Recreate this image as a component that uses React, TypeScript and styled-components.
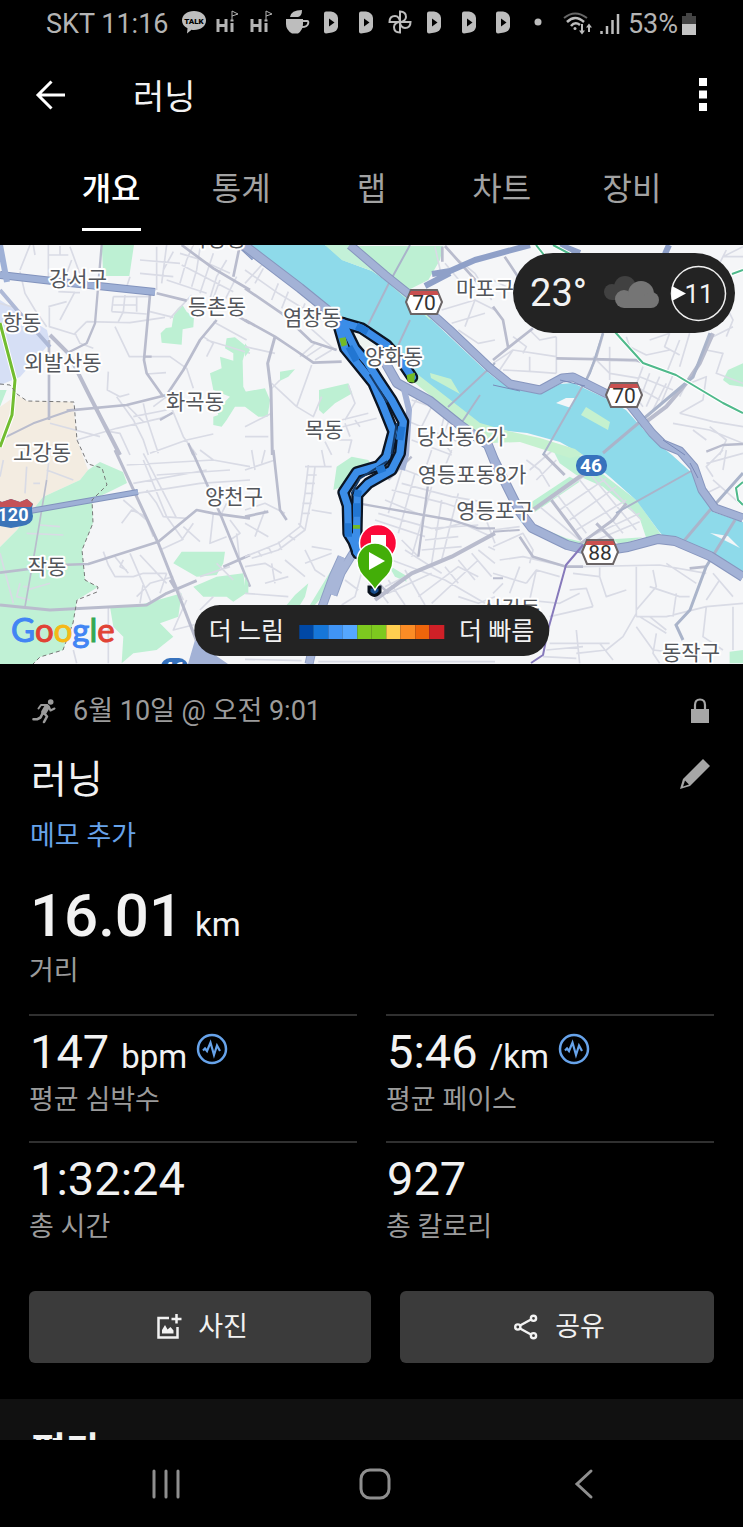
import React from "react";
import styled, { createGlobalStyle } from "styled-components";

const GlobalStyle = createGlobalStyle`
  * { box-sizing: border-box; }
  html, body { margin: 0; padding: 0; background: #000; }
  body { font-family: Roboto, "Noto Sans CJK KR", sans-serif; color: #f2f2f2; }
  button { font: inherit; color: inherit; border: 0; background: none; padding: 0; cursor: pointer; }
  svg { display: block; }
`;

const Screen = styled.div`
  display: flex;
  flex-direction: column;
  height: 100vh;
  background: #000;
`;

const StatusBar = styled.div`
  display: flex;
  align-items: center;
  flex: none;
  height: 46px;
  padding: 2px 46px 0;
  font-size: 27px;
  line-height: 32px;
  color: #b4b4b4;
`;

const StatusIcons = styled.div`
  flex: 1;
  display: grid;
  grid-template-columns: repeat(11, 1fr);
  justify-items: center;
  align-items: center;
  margin: 0 8px 4px 8px;
`;

const StatusRight = styled.div`
  display: flex;
  align-items: center;
  gap: 8px;
`;

const Battery = styled.span`
  display: flex;
  align-items: center;
  gap: 4px;
`;

const Header = styled.header`
  display: flex;
  align-items: center;
  flex: none;
  height: 97px;
  padding: 0 33px;
`;

const HeaderTitle = styled.h1`
  flex: 1;
  margin: 0 0 0 64px;
  padding-top: 4px;
  font-size: 34px;
  font-weight: 400;
  line-height: 48px;
`;

const Tabs = styled.nav`
  display: flex;
  flex: none;
  height: 102px;
  padding: 0 46px;
`;

const TabItem = styled.div`
  flex: 1;
  display: flex;
  justify-content: center;
  align-items: flex-start;
`;

const Tab = styled.button<{ $active?: boolean }>`
  height: 88px;
  font-size: 32px;
  line-height: 46px;
  padding-top: 6px;
  font-weight: ${(p) => (p.$active ? 500 : 400)};
  color: ${(p) => (p.$active ? "#fff" : "#a2a2a2")};
  border-bottom: 3px solid ${(p) => (p.$active ? "#fff" : "transparent")};
`;

const Scroller = styled.main`
  flex: 1;
  min-height: 0;
  overflow-y: auto;
  scrollbar-width: none;
`;

const MapPanel = styled.section`
  position: relative;
  height: 419px;
  overflow: hidden;
  background: #f5f6f8;

  > svg { width: 100%; height: 100%; }
`;

const Weather = styled.div`
  position: absolute;
  top: 8px;
  right: 8px;
  display: flex;
  align-items: center;
  height: 80px;
  padding: 0 8px 0 17px;
  border-radius: 40px;
  background: #232323;
  font-size: 38px;
  line-height: 48px;

  > svg:first-of-type { margin: 0 9px 0 17px; }
`;

const Legend = styled.div`
  position: absolute;
  bottom: 8px;
  left: 50%;
  transform: translateX(-50%);
  display: flex;
  align-items: center;
  gap: 15px;
  height: 51px;
  padding: 2px 15px 0;
  border-radius: 26px;
  background: #232323;
  font-size: 25px;
  line-height: 36px;
  white-space: nowrap;
`;

const Scale = styled.div`
  display: flex;
  width: 145px;
  height: 14px;
`;

const Swatch = styled.span<{ $color: string }>`
  flex: 1;
  background: ${(p) => p.$color};
`;

const Summary = styled.section`
  padding: 27px 29px 36px;
`;

const MetaRow = styled.div`
  display: flex;
  align-items: center;
  height: 40px;
  padding: 0 4px 0 3px;
  font-size: 27px;
  line-height: 40px;
  color: #9b9b9b;
`;

const DateText = styled.span`
  flex: 1;
  margin-left: 16px;
`;

const TitleRow = styled.div`
  display: flex;
  align-items: center;
  justify-content: space-between;
  height: 60px;
  margin-top: 19px;
  padding: 0 3px 0 2px;
`;

const ActivityTitle = styled.h2`
  margin: 0;
  font-size: 39px;
  font-weight: 400;
  line-height: 60px;
`;

const EditButton = styled.button`
  padding-bottom: 12px;
`;

const NoteButton = styled.button`
  display: block;
  font-size: 27px;
  line-height: 40px;
  margin: 6px 0 0 1px;
  color: #67a3ea;
`;

const Metric = styled.div`
  display: flex;
  flex-direction: column;
`;

const Value = styled.div<{ $large?: boolean }>`
  display: flex;
  align-items: baseline;
  gap: 12px;
  padding-left: 1px;
  font-size: ${(p) => (p.$large ? 60 : 47)}px;
  font-weight: ${(p) => (p.$large ? 500 : 400)};
  line-height: ${(p) => (p.$large ? 74 : 60)}px;
`;

const Unit = styled.span`
  font-size: 33px;
  font-weight: 400;
  line-height: 36px;
  margin-right: -3px;
`;

const PulseButton = styled.button`
  align-self: flex-start;
  margin-top: 11px;
  line-height: 32px;
`;

const Label = styled.div`
  font-size: 27px;
  line-height: 36px;
  color: #9b9b9b;
`;

const DistanceBlock = styled.div`
  margin: 23px 0 25px;
`;

const MetricGrid = styled.div`
  display: grid;
  grid-template-columns: 1fr 1fr;
  column-gap: 29px;
`;

const GridCell = styled(Metric)`
  height: 127px;
  padding-top: 6px;
  border-top: 2px solid #303030;
`;

const Actions = styled.div`
  display: grid;
  grid-template-columns: 12fr 11fr;
  gap: 29px;
  margin-top: 23px;
`;

const ActionButton = styled.button`
  display: flex;
  align-items: center;
  justify-content: center;
  gap: 16px;
  height: 72px;
  padding-left: 4px;
  border-radius: 6px;
  background: #3b3b3b;
  font-size: 27px;
  line-height: 40px;
  color: #f2f2f2;
`;

const NextSection = styled.section`
  padding: 24px 31px;
  background: #111;
`;

const SectionTitle = styled.h2`
  margin: 0;
  font-size: 38px;
  font-weight: 700;
  line-height: 56px;
`;

const NavBar = styled.nav`
  display: flex;
  align-items: center;
  justify-content: space-around;
  flex: none;
  height: 87px;
  padding: 0 55px 0 61px;
  background: #000;
`;

const NavButton = styled.button`
  display: flex;
  align-items: center;
  justify-content: center;
  width: 80px;
  height: 60px;
`;

/* ---------- status icons ---------- */

const HiIcon = () => (
  <svg width="24" height="24" viewBox="0 0 24 24" fill="none" stroke="#b4b4b4">
    <path d="M2 9V22M10 9V22M2 15.500H10M16 13V22" strokeWidth="3" />
    <path d="M16 10V1L22 4 16 6" strokeWidth="1" />
    <path d="M14.500 10.500H17.500" strokeWidth="2" />
  </svg>
);

const PlayTile = () => (
  <svg width="16" height="24" viewBox="0 0 16 24">
    <path d="M3 1.500H8Q14.500 2.500 15 8V17Q14 21.500 9 22.500L3 23.500Q1 23.500 1 21.500V3.500Q1 1.500 3 1.500Z" fill="#bdbdbd" />
    <path d="M6 8.500L11.500 12.500 6 16.500Z" fill="#000" />
  </svg>
);

const TalkIcon = () => (
  <svg width="26" height="24" viewBox="0 0 26 24">
    <path d="M13 1C20 1 25 5 25 10.500S20 20 13 20Q11.500 20 10.500 19.700L6 23.500 6.500 18.300C3 16.600 1 13.800 1 10.500 1 5 6 1 13 1Z" fill="#bdbdbd" />
    <text x="13" y="13.500" textAnchor="middle" fontSize="8" fontWeight="900" fontFamily="Roboto, sans-serif" fill="#000">TALK</text>
  </svg>
);

const CupIcon = () => (
  <svg width="26" height="26" viewBox="0 0 26 26">
    <path d="M6 8Q7 1 18 1 18 7 14 8Z" fill="#bdbdbd" />
    <path d="M2 10H19V15Q19 21 14 24.500H8Q2 21 2 15Z" fill="#bdbdbd" />
    <path d="M19 12H23Q25 12 24 15 23 18 18 18" fill="none" stroke="#bdbdbd" strokeWidth="2" />
  </svg>
);

const PinwheelIcon = () => (
  <svg width="24" height="24" viewBox="0 0 24 24" fill="none" stroke="#bdbdbd" strokeWidth="2">
    {[0, 90, 180, 270].map((a) => (
      <path key={a} transform={`rotate(${a} 12 12)`} d="M12 12V1.500C16 1.500 18 4 18 7 18 10 15 12 12 12Z" />
    ))}
  </svg>
);

const WifiIcon = () => (
  <svg width="29" height="24" viewBox="0 0 29 24" fill="none" stroke="#bdbdbd">
    <path d="M1 6Q12-3 24 6" stroke="#666" strokeWidth="2" />
    <path d="M4 10Q12 2 21 10" strokeWidth="2.500" />
    <path d="M8 14Q12 9 17 13" strokeWidth="2.500" />
    <circle cx="12" cy="16.500" r="1.500" fill="#bdbdbd" stroke="none" />
    <path d="M19 12V20M26 20V13" strokeWidth="2" />
    <path d="M16 18.500H22L19 22.500ZM23 15.500H29L26 11.500Z" fill="#bdbdbd" stroke="none" />
  </svg>
);

const SignalIcon = () => (
  <svg width="20" height="22" viewBox="0 0 20 22" stroke="#bdbdbd" strokeWidth="2.500">
    <path d="M1.500 18V21M7 13V21M12.500 7V21M18 1V21" />
  </svg>
);

const BatteryIcon = () => (
  <svg width="15" height="22" viewBox="0 0 15 22">
    <path d="M4 0H10V3H14V11H0V3H4Z" fill="#444" />
    <path d="M0 11H14V22H0Z" fill="#c4c4c4" />
  </svg>
);

/* ---------- app icons ---------- */

const BackArrow = () => (
  <svg width="36" height="32" viewBox="0 0 36 32" fill="none" stroke="#fff" strokeWidth="3">
    <path d="M18.500 2.500L5 16 18.500 29.500M5 16H32" />
  </svg>
);

const MoreIcon = () => (
  <svg width="14" height="34" viewBox="0 0 14 34" fill="#fff">
    <path d="M3 0H11V8H3ZM3 12.500H11V20.500H3ZM3 25H11V33H3Z" />
  </svg>
);

const RunnerIcon = () => (
  <svg width="25" height="25" viewBox="0 0 25 25" fill="none" stroke="#9b9b9b" strokeLinecap="round" strokeLinejoin="round">
    <circle cx="18.700" cy="3" r="2.800" fill="#9b9b9b" stroke="none" />
    <path d="M15 8L12 13" strokeWidth="5.500" />
    <path d="M15 6L9 6 6.500 9.500M17 8L18.500 11.500 22.500 9.500" strokeWidth="2" />
    <path d="M12 14L15 17.500 12 23M10.500 14.500L8.500 18.500 5 20.300 1.500 20.300" strokeWidth="2.600" />
  </svg>
);

const LockIcon = () => (
  <svg width="20" height="26" viewBox="0 0 20 26">
    <path d="M5 12V7Q5 1.500 10 1.500T15 7V12" fill="none" stroke="#a6a6a6" strokeWidth="2.200" />
    <path d="M1 11H19V25H1Z" fill="#a6a6a6" />
  </svg>
);

const PencilIcon = () => (
  <svg width="32" height="32" viewBox="0 0 32 32">
    <path d="M24 1L31 8 11 28 1 31 4 21Z" fill="#a6a6a6" />
    <path d="M6 22.500L10 26.500 4 28.500Z" fill="#000" />
  </svg>
);

const PulseIcon = () => (
  <svg width="32" height="32" viewBox="0 0 32 32" fill="none" stroke="#67a3ea">
    <circle cx="16" cy="16" r="14" strokeWidth="2.500" />
    <path d="M7 17.500L9 15.500 11 18 14.500 9.500 18 22 21 12.500 24 18" strokeWidth="2.200" />
  </svg>
);

const PhotoIcon = () => (
  <svg width="26" height="26" viewBox="0 0 26 26" fill="none" stroke="#f2f2f2" strokeWidth="2.500">
    <path d="M13 4H2.500V23.500H21.500V13" />
    <path d="M20.500 0V9.500M15.500 5H25.500" />
    <path d="M6 19.500V16L9 11 11.500 15.500 14.500 13 17.500 16.500V19.500Z" fill="#f2f2f2" stroke="none" />
  </svg>
);

const ShareIcon = () => (
  <svg width="26" height="26" viewBox="0 0 26 26" fill="none" stroke="#f2f2f2" strokeWidth="2.400">
    <path d="M18 5.500L7 11.500M7 14.500L18 20.500" />
    <circle cx="4.800" cy="13" r="2.600" />
    <circle cx="20.500" cy="4.300" r="2.600" />
    <circle cx="20.500" cy="21.700" r="2.600" />
  </svg>
);

/* ---------- map ---------- */

type Road = { d: string; w: number };
type Tile = { x: number; y: number; parks: string; minor: string; mid: Road[] };

/* Street tiles, drawn at three units to the pixel. */
const TILES: Tile[] = [
  {
    x: 0,
    y: 240,
    parks:
      "M305 15H402L388 108H310ZM520 232Q530 200 548 196L560 215 582 232 580 262 548 268 545 314 485 308 482 280 498 264 515 262ZM680 295L705 292 740 320 728 362 730 440 750 480V500L705 500 680 540 665 560 640 555 640 530 655 525 650 510 690 470 640 450 630 400 665 385 660 350 700 362 700 340 675 325ZM0 450H20L0 500Z",
    minor:
      "M145 15V110M145 45H205M180 18V45M90 15L60 90M215 60L200 100M60 95L75 160 105 210 140 260M175 155L240 158M145 200L200 185M148 200V260L230 285M225 155L180 240M260 245L225 280 240 310 280 325M260 245L390 248 495 232M340 170L335 215M340 170H450M335 215L440 222M375 165L370 215 355 245M410 170V215M340 195H410M345 260L388 350 510 350 560 385 580 445M325 395L322 450 360 470 388 462M440 402L498 398M350 470L400 540 430 600 445 645M430 490L440 535 475 640M380 495L430 545M400 530L500 510M230 600L350 565 480 535 518 520M290 510L330 575 360 580 390 645M150 550L300 590M515 505L550 590 590 645M450 640L560 600 640 582M500 470L460 500M580 15L560 60 540 130M600 25L590 90 575 140M640 40L620 100 600 160M680 60L650 110 630 175M545 75L700 155M500 120L620 160M540 40L590 55 690 100M575 165L510 235M640 245L740 300M620 300L750 340M450 215L520 232M470 20V150M500 15L485 130M420 60L540 70M420 100L520 110M390 110L380 140M520 35L490 90M210 20L250 130M660 120L640 175M710 110L660 210M610 290L640 310 620 350M50 205L0 190M100 15L105 45",
    mid: [
      { d: "M305 15L285 250 260 310 200 340", w: 7 },
      { d: "M470 160L560 182M450 165L432 360 440 400 490 470", w: 8 },
      { d: "M650 240L600 300 550 390 500 465 380 495 200 512", w: 8 },
      { d: "M0 600L100 550 215 510", w: 6 },
      { d: "M147 300V540", w: 8 },
      { d: "M150 285L205 340 270 470 360 645", w: 12 },
      { d: "M545 15L640 85 750 150M720 15L700 110M690 215L750 250", w: 8 },
      { d: "M480 540L518 518M430 350H455M565 610L580 645", w: 7 },
    ],
  },
  {
    x: 245,
    y: 240,
    parks:
      "M240 18H595L585 60 550 120 490 150 420 120 380 90 290 60ZM222 450L310 430 322 460 270 490 235 522 222 510ZM0 455L60 445 75 480 68 530 40 530 0 500ZM105 395L150 388 130 410 105 422ZM0 310L15 330 0 350Z",
    minor:
      "M0 90L100 160 240 245M55 85L30 130M100 130L80 180M130 155L110 205M180 190L160 240M0 130L50 75M0 320L90 340M165 350L210 310M185 350L230 320M210 360L260 330M200 375L155 500 205 530 230 470M80 430L155 500M310 435L330 490 300 540M250 550L370 520M255 570L395 535M330 540L345 560M300 550L315 590M240 605L260 645M255 600H320L310 640M75 450L105 420M600 20L640 60 690 100 740 180M600 70L650 130M590 210L690 180 750 210M620 250L720 220M640 270L700 310 750 300M690 180L660 260M490 440L520 470 490 520M500 480L560 500 530 560M560 470L600 520 580 600M450 440L480 460M620 520L590 600 620 640M480 540L650 610M500 600L620 645M570 20L590 110M0 590H70M180 250L270 330M0 560L80 520",
    mid: [
      { d: "M0 145L110 220M0 240L90 290 150 330 205 368 290 365M110 220L200 305 275 330", w: 8 },
      { d: "M90 290L68 370 78 450 82 645", w: 9 },
      { d: "M592 20V65M600 18L700 130", w: 8 },
    ],
  },
  {
    x: 493,
    y: 240,
    parks: "M690 420L705 390 750 370V440L710 435Z",
    minor:
      "M0 120L40 140M0 370L60 330 190 350M20 390L60 330M30 390L120 395 190 400M110 350V395M190 290V400M190 290L140 300 110 270M60 290L100 320 90 340M300 350L350 400 440 415M350 320V420M310 360L450 365M400 290L410 320 460 345 530 330M470 300L530 280M530 280L515 320 560 345M560 300L520 400M590 280L560 380M450 380L420 460 450 500M470 400L440 480M500 410L460 500M520 430L480 510M430 440L500 480M440 410L540 450M540 405L500 500M580 430L560 470M590 430L640 410 630 480 560 520M640 330L690 340 670 400 750 430M700 290L720 240 700 200M660 290L720 260M650 130L690 50 750 20M560 520L660 545 750 560M650 560L700 600 680 645M600 570L640 600M540 550L650 570 750 610M700 30L690 50H750",
    mid: [
      { d: "M0 360L50 320 120 265M0 200L30 240 45 320M35 50L75 110", w: 8 },
      { d: "M190 355L430 360 530 400M330 280L310 350 280 420", w: 8 },
      { d: "M660 280L620 370 580 430 520 500 440 560", w: 12 },
      { d: "M640 635L690 615 750 612", w: 7 },
    ],
  },
  {
    x: 0,
    y: 450,
    parks:
      "M520 340L545 305 675 305 670 340 650 375 590 380ZM580 410L650 380 730 370 738 430 700 455 680 440 610 440ZM330 470L400 470 545 430 535 500 480 520 520 560 470 600 400 610 365 640 370 560 340 530Z",
    minor:
      "M80 50L75 130M10 30L0 80M140 60L220 90M150 0L140 90M100 100H120M80 250L190 255M120 225L180 230M380 45L640 30M400 100L620 60M430 30L500 200 550 270M430 10L530 205M470 75L690 60M410 130L600 100 750 90M365 220L395 180 440 200M370 150L440 210 460 260M440 120L470 160 490 200 560 205M550 230L600 275M480 300L545 270 580 220M640 190L630 280 680 260M690 210L720 250 690 270M310 305L325 345 345 380 400 380 430 370 500 370M345 320L385 370M370 330L360 350 380 360M390 310L455 460M420 315L500 400M410 440L450 400 520 380M430 400L420 460M500 370L480 430M560 450L520 540 600 520M600 380L690 350M650 340L700 390M0 310L40 460M150 400L80 420M60 400L50 440 90 450M70 410H90M325 470V640M220 600L230 640M600 0L640 30 750 50M710 250L720 340M640 440L600 480M680 160L660 200M520 390L550 450",
    mid: [
      { d: "M345 0L475 280 550 470 600 600", w: 9 },
      { d: "M0 368L180 345 265 342 475 275 590 180 640 190 750 205", w: 8 },
      { d: "M0 465L150 480 440 465 500 430 590 392", w: 9 },
      { d: "M575 0L660 190 750 410M670 350L750 315M510 390L525 415", w: 8 },
      { d: "M75 470L105 300 140 90", w: 5 },
    ],
  },
  {
    x: 245,
    y: 450,
    parks:
      "M265 350L290 320 240 430 210 465H195ZM190 400L180 440 165 465H125L150 435ZM275 50L320 20 370 30 385 55 330 70 290 110 265 120ZM430 345L480 375 485 395 450 380ZM0 380L10 400V430H0Z",
    minor:
      "M180 50H260M190 45L180 130 165 230 100 280 0 320M210 50L200 140 180 240 100 300 20 325M185 75H215M180 100H210M178 130H205M172 160H200M170 190H195M160 220L180 240M130 255L150 270M100 275L110 300M70 290L80 310M40 305L50 320M0 60L90 30M20 0L30 60M60 0L50 40M0 220L70 260M0 180L60 160 120 190M200 180L260 190M60 180L30 260M230 0L240 50M0 350L60 340 110 370M60 400L130 380M80 340L90 400M0 430L130 440M180 340L260 310M200 290L260 300M180 300L210 360 240 380M120 330L180 380M480 60L560 90M470 100L620 140M440 120L600 160M420 150L540 200M400 190L560 235 700 225M390 210L540 260M470 60L430 190M510 70L460 250M560 110L500 320M590 150L560 340M640 130L590 330M620 140L740 160M660 60L600 90M560 0L540 60M620 0L600 50M570 240L650 220 740 260M540 270L640 260M530 300L650 290M600 160L720 200 750 280M470 270L520 320M440 330L600 390 720 460M480 300L590 370M420 410L540 350M430 430L560 370M520 440L640 350 700 380M560 460L700 330M600 350L640 400M640 330L690 390M680 310L740 380M700 300L750 340M730 290L750 300M640 440L700 460 750 440M0 628L170 632M220 635H750M430 460L400 420 370 400M480 465L430 390M540 465L480 360M360 330L330 440 290 465M300 390L340 420",
    mid: [
      { d: "M85 0L105 180 125 210M0 200L70 185", w: 8 },
      { d: "M340 160L620 210 700 235 750 235M555 60L520 320M500 20L430 90", w: 7 },
      { d: "M390 450L500 370 620 320 750 250", w: 12 },
      { d: "M380 380L430 430", w: 8 },
    ],
  },
  {
    x: 493,
    y: 450,
    parks:
      "M180 0L245 5 340 80 430 150 505 255 460 265 440 205 330 110 250 75 200 40ZM110 160L230 80 260 95 120 190ZM100 215L220 265 280 278 270 295 200 288 120 250ZM360 268L450 262 380 285ZM620 130L660 185 650 190 630 165ZM710 605L750 600V640H710Z",
    minor:
      "M170 150L300 60M200 180L340 85M230 210L370 110M250 240L400 150M290 260L440 190M310 270L440 215M260 90L390 250M290 70L430 240M320 80L445 210M190 130L280 250M140 170L260 270M110 60L180 0M130 90L190 30M100 30L140 60 170 110M0 240L80 230M0 290L90 250 120 300 110 340M0 180L60 200M20 330L90 320 220 350M270 350L500 345 640 370M320 350V380L340 440 400 420M430 345V500M230 420L280 415 300 470M320 380L240 370M200 380L130 360 100 400M130 360L110 450M100 450L200 460 260 430M170 500L300 470M430 500L520 500 640 470 750 460M470 410L560 440 590 440M480 360L490 410 430 480M550 430L540 500M520 340L610 400M430 490L390 560 340 600 250 610M430 530L480 600 570 610M440 500L520 550M470 500L520 540M640 470L630 560 690 600M680 390L640 450M660 370L720 440M720 470V600M170 580H350M160 600L270 590M150 620L250 625M250 540L260 640M320 580L360 630M690 0L640 50 660 80M640 40L750 10M680 110L640 130M660 90L740 160M490 550L480 610 500 640M0 370L100 400M0 430L30 400M700 0L690 60M80 350L50 430",
    mid: [
      { d: "M120 180L260 80 400 0", w: 12 },
      { d: "M175 150L265 270M150 10L215 75M310 220L360 270M250 290L360 210 400 160", w: 9 },
      { d: "M80 260L120 320 220 350 270 350M590 355L640 350", w: 8 },
      { d: "M0 245L80 240M0 385H30", w: 6 },
    ],
  },
];

const WATER =
  "M250 245H325L342 260 372 271 385 280 408 300 432 320 485 370 495 378 510 388 540 394 560 384 573 383 603 397 626 410 653 440 672 455 693 474 700 493 713 512 743 522V573L710 553 680 542 663 536 658 530 636 500 610 477 583 455 560 442 527 433 508 431 480 425 460 410 430 388 412 373 388 355 345 320 325 312 295 287 265 260Z";

const NORTH_ROAD =
  "M350 245L385 275 420 303 450 330 490 368 510 384 540 390 562 378 573 377 605 393 630 405 652 433 663 444 680 451 694 467 702 490 715 508 743 518";
const SOUTH_ROAD =
  "M245 246L300 288 337 318M385 362L397 383 430 401 460 425 488 445 494 460 505 482 520 512 532 528 567 545 595 552 628 547 658 539 675 541 710 556 743 577";

const ROUTE_WEST =
  "M280 255L300 325 345 380 385 430 415 500 445 575 425 650 400 678 335 697 295 757 308 797 310 880 325 905 338 940";
const ROUTE_EAST =
  "M292 248L330 325 365 365 400 420 440 480 475 545 465 640 440 690 370 730 337 765 335 865 335 935";
const ROUTE_SPUR = "M292 248L350 265 425 315 470 365 502 412";

const PLACES: [string, number, number][] = [
  ["가양동", 217, 246],
  ["강서구", 78, 286],
  ["등촌동", 217, 314],
  ["항동", 22, 330],
  ["외발산동", 63, 370],
  ["화곡동", 195, 409],
  ["고강동", 42, 460],
  ["양천구", 234, 504],
  ["작동", 47, 574],
  ["염창동", 312, 325],
  ["양화동", 394, 364],
  ["목동", 324, 437],
  ["당산동6가", 461, 444],
  ["영등포동8가", 472, 482],
  ["영등포구", 495, 518],
  ["마포구", 485, 296],
  ["신길동", 511, 616],
  ["동작구", 691, 660],
];

const LOGO: [string, string][] = [
  ["G", "#4285f4"],
  ["o", "#e14235"],
  ["o", "#f5b917"],
  ["g", "#4285f4"],
  ["l", "#34a853"],
  ["e", "#e14235"],
];

const HexShield = ({ x, y, label }: { x: number; y: number; label: string }) => (
  <g transform={`translate(${x} ${y})`}>
    <path d="M-13-12H13L18 0 13 12H-13L-18 0Z" fill="#fff" stroke="#6b6566" strokeWidth="2" />
    <path d="M-13-11H13L15-7H-15Z" fill="#c9504f" />
    <text y="8" textAnchor="middle" fontSize="21" fill="#333">{label}</text>
  </g>
);

const ActivityMap = () => (
  <svg viewBox="0 245 743 419" preserveAspectRatio="xMidYMid slice" role="img" aria-label="러닝 경로 지도" fontFamily='Roboto, "Noto Sans CJK KR", sans-serif'>
    <path d="M0 300L47 330 50 343 20 377 0 385Z" fill="#d6dff5" />
    <path d="M0 407L17 395 27 401 73 402 77 440 88 470 80 480 43 497 17 530 0 547Z" fill="#f3ece1" />
    <path d="M0 547L17 530 43 497 80 480 88 470 100 462 123 472 127 483 113 490 92 500 93 523 82 550 85 580 98 587 77 600 73 623 63 650 40 657 33 664H0Z" fill="#c0f1d5" />

    {TILES.map((t) => (
      <g key={`${t.x}-${t.y}`} transform={`translate(${t.x} ${t.y}) scale(.3333)`} fill="none" strokeLinejoin="round">
        <path d={t.parks} fill="#bdf0d3" />
        <path d={t.minor} stroke="#d9dbe5" strokeWidth="5" />
        {t.mid.map((r) => (
          <path key={r.d} d={r.d} stroke="#b9bccd" strokeWidth={r.w} />
        ))}
      </g>
    ))}

    <path d={WATER} fill="#8edaea" />
    <path d="M325 245H350L408 296 432 316 430 320 385 280 372 271 342 260Z" fill="#c3f1d8" />
    <path d="M412 370L480 423 508 431 540 438 575 449 583 455 570 458 520 442 490 443 475 432 415 383Z" fill="#c5f1cf" />
    <path d="M430 373L451 379 460 394 431 378ZM581 415L586 407 610 422 608 430Z" fill="#c5f1cf" />
    <path d="M556 403L566 398 575 398 571 408ZM710 533L728 536 740 548Z" fill="#f3f6f8" />

    <g fill="none" stroke="#aab4ca" strokeWidth="3">
      <path d="M410 245L388 285 368 325M410 320L396 350M495 363L448 407M603 333L590 373 543 455" strokeWidth="2" />
      <path d="M710 333L693 377 603 453M743 473L710 510 683 542M735 520L706 567 690 610 676 625 683 640" />
      <path d="M693 470L616 513M480 395L460 425" strokeWidth="2" />
    </g>

    <g fill="none" strokeLinejoin="round">
      <path d="M0 275L70 283 155 292" stroke="#8293bd" strokeWidth="8" />
      <path d="M0 275L70 283 155 292" stroke="#9eb0d6" strokeWidth="6" />
      <path d="M0 245L7 282" stroke="#9eb0d6" strokeWidth="6" />
      <path d="M0 290L17 310 50 347" stroke="#aeb9d6" strokeWidth="4" />
      <path d="M30 511L138 492M240 245L254 258" stroke="#8293bd" strokeWidth="6" />
      <path d="M30 511L138 492M240 245L254 258" stroke="#9eb0d6" strokeWidth="4" />
      <path d="M432 274L450 271 475 260 530 245M425 286L450 273M560 245L580 253M669 245L665 254" stroke="#8fa0c8" strokeWidth="6" />
      <path d={NORTH_ROAD} stroke="#8796be" strokeWidth="9" />
      <path d={NORTH_ROAD} stroke="#a3b2d6" strokeWidth="7" />
      <path d={SOUTH_ROAD} stroke="#8796be" strokeWidth="10" />
      <path d={SOUTH_ROAD} stroke="#a3b2d6" strokeWidth="8" />
      <path d="M342 557L333 577 322 607 309 664M355 550L341 573 333 595" stroke="#8f9fc5" strokeWidth="9" />
      <path d="M342 557L333 577 322 607 309 664M355 550L341 573 333 595" stroke="#a8b6d8" strokeWidth="7" />
      <path d="M403 385L409 410 406 455 402 470" stroke="#a3b2d6" strokeWidth="6" />
      <path d="M493 385L520 391M690 463L698 478M560 380L585 386M663 440L685 455" stroke="#7989b8" strokeWidth="1" />
      <path d="M195 640L215 655 228 664H188Z" fill="#a3b2d6" />
      <path d="M536 245L544 255M553 245L570 254M615 332L643 363 676 375 723 403 743 413M732 274L743 270M743 482L736 488 738 500 743 505" stroke="#fff" strokeWidth="4" />
      <path d="M536 245L544 255M553 245L570 254M615 332L643 363 676 375 723 403 743 413M732 274L743 270M743 482L736 488 738 500 743 505" stroke="#4fb98b" strokeWidth="2" />
      <path d="M583 545L566 565 548 630 543 655 531 663" stroke="#8679bb" strokeWidth="2" />
      <path d="M0 323L15 380 12 415 0 447" stroke="#fff" strokeWidth="5" />
      <path d="M0 323L15 380 12 415 0 447" stroke="#72bd31" strokeWidth="3" />
      <path d="M0 384L10 385 17 394 27 401 74 402 77 440 88 464 102 468 107 485 92 500 93 523 82 550 85 580 98 587 97 592 77 600 73 623 63 650 40 657 33 664" stroke="#777" strokeWidth="1" strokeDasharray="4 3" />
    </g>

    <g transform="translate(245 240) scale(.3333)" fill="none" strokeLinejoin="round" strokeLinecap="round">
      <path d="M305 268L345 285 410 325 350 345Z" fill="#edf3ef" />
      <path d={ROUTE_SPUR} stroke="#0b1524" strokeWidth="36" />
      <path d={ROUTE_WEST} stroke="#0b1524" strokeWidth="36" />
      <path d={ROUTE_EAST} stroke="#0b1524" strokeWidth="36" />
      <g stroke="#3b8de8" strokeWidth="22">
        <path d={ROUTE_SPUR} />
        <path d={ROUTE_WEST} />
        <path d={ROUTE_EAST} />
      </g>
      <path d="M375 405L425 485M455 552L440 640M425 665L345 715 320 760" stroke="#163b68" strokeWidth="6" />
      <g stroke="#2276d2" strokeWidth="22" strokeLinecap="butt">
        <path d="M335 258L368 275M312 320L335 362M470 560L464 600M420 683L396 692M340 750L336 770M310 850V890M335 790V830" />
      </g>
      <path d="M283 295L302 292 306 315 290 320ZM485 405L510 398 508 428 488 425ZM324 855H345V866H324Z" fill="#72ba25" />
    </g>

    <g fontSize="21" fill="#53565b" stroke="#fff" strokeWidth="4" strokeLinejoin="round" paintOrder="stroke" textAnchor="middle">
      {PLACES.map(([name, x, y]) => (
        <text key={name} x={x} y={y}>{name}</text>
      ))}
    </g>

    <HexShield x={424} y={302} label="70" />
    <HexShield x={624} y={395} label="70" />
    <HexShield x={600} y={552} label="88" />
    <g fontWeight="700" fill="#fff" textAnchor="middle">
      <rect x="576" y="455" width="31" height="21" rx="10" fill="#3772bd" />
      <text x="591" y="472" fontSize="19">46</text>
      <path d="M-4 500L2 502 11 499 20 502 27 499 33 504Q31 509 33 516 33 524 22 526L11 528 0 526H-4Z" fill="#3b74b8" />
      <path d="M-4 500L2 502 11 499 20 502 27 499 33 504 31 507H-4Z" fill="#c45257" />
      <text x="13" y="521" fontSize="18">120</text>
      <rect x="161" y="658" width="27" height="20" rx="9" fill="#3772bd" />
      <text x="174" y="675" fontSize="19">46</text>
    </g>

    <path d="M369 587H380V592Q374 599 369 592Z" fill="#164c8c" stroke="#07101c" strokeWidth="3" />
    <circle cx="378" cy="543" r="18.500" fill="#fb0939" stroke="#fff" strokeWidth="1.500" />
    <path d="M371 535H386V550H371Z" fill="#fff" />
    <path d="M375 590C369 579 357 575 357 561A18 18 0 0 1 393 561C393 575 381 579 375 590Z" fill="#43ae08" stroke="#fff" strokeWidth="1.500" />
    <path d="M369 552L385 561 369 570Z" fill="#fff" />

    <text x="11" y="642" fontFamily="Lato, sans-serif" fontSize="33">
      {LOGO.map(([letter, color], i) => (
        <tspan key={i} fill={color} stroke={color} strokeWidth="1">{letter}</tspan>
      ))}
    </text>
  </svg>
);

const CloudIcon = () => (
  <svg width="57" height="34" viewBox="0 0 57 34">
    <g fill="#414141">
      <circle cx="8" cy="16" r="8" />
      <circle cx="21" cy="11" r="11" />
      <path d="M8 12H28V24H8Z" />
    </g>
    <g fill="#757575">
      <circle cx="20" cy="23" r="9" />
      <circle cx="37" cy="18" r="13" />
      <circle cx="47" cy="24" r="8" />
      <path d="M20 20H47V32H20Z" />
    </g>
  </svg>
);

const WindIcon = () => (
  <svg width="57" height="57" viewBox="0 0 57 57">
    <circle cx="28.500" cy="28.500" r="27" fill="none" stroke="#f0f0f0" strokeWidth="1.500" />
    <path d="M2 21L16 28.500 2 36Z" fill="#fff" />
    <text x="29" y="38" textAnchor="middle" fontSize="26" fontFamily="Roboto, sans-serif" fill="#f2f2f2">11</text>
  </svg>
);

const PACE_COLORS = ["#0048a5", "#1676d8", "#4094f5", "#55a7ff", "#7dc91f", "#7dc91f", "#ffce50", "#fb8c25", "#ee650b", "#cf2027"];
const TABS = ["개요", "통계", "랩", "차트", "장비"];
const METRICS = [
  { value: "147", unit: "bpm", label: "평균 심박수", pulse: true },
  { value: "5:46", unit: "/km", label: "평균 페이스", pulse: true },
  { value: "1:32:24", label: "총 시간" },
  { value: "927", label: "총 칼로리" },
];

export default function App() {
  return (
    <Screen>
      <GlobalStyle />
      <StatusBar>
        <span>SKT 11:16</span>
        <StatusIcons>
          <TalkIcon />
          <HiIcon />
          <HiIcon />
          <CupIcon />
          <PlayTile />
          <PlayTile />
          <PinwheelIcon />
          <PlayTile />
          <PlayTile />
          <PlayTile />
          <svg width="8" height="8" viewBox="0 0 8 8"><circle cx="4" cy="4" r="3.500" fill="#bdbdbd" /></svg>
        </StatusIcons>
        <StatusRight>
          <WifiIcon />
          <SignalIcon />
          <Battery>
            <span>53%</span>
            <BatteryIcon />
          </Battery>
        </StatusRight>
      </StatusBar>

      <Header>
        <button aria-label="뒤로"><BackArrow /></button>
        <HeaderTitle>러닝</HeaderTitle>
        <button aria-label="더보기"><MoreIcon /></button>
      </Header>

      <Tabs>
        {TABS.map((t, i) => (
          <TabItem key={t}>
            <Tab $active={i === 0}>{t}</Tab>
          </TabItem>
        ))}
      </Tabs>

      <Scroller>
        <MapPanel>
          <ActivityMap />
          <Weather>
            <span>23°</span>
            <CloudIcon />
            <WindIcon />
          </Weather>
          <Legend>
            <span>더 느림</span>
            <Scale>
              {PACE_COLORS.map((c, i) => (
                <Swatch key={i} $color={c} />
              ))}
            </Scale>
            <span>더 빠름</span>
          </Legend>
        </MapPanel>

        <Summary>
          <MetaRow>
            <RunnerIcon />
            <DateText>6월 10일 @ 오전 9:01</DateText>
            <LockIcon />
          </MetaRow>
          <TitleRow>
            <ActivityTitle>러닝</ActivityTitle>
            <EditButton aria-label="편집"><PencilIcon /></EditButton>
          </TitleRow>
          <NoteButton>메모 추가</NoteButton>

          <DistanceBlock>
            <Value $large>
              16.01<Unit>km</Unit>
            </Value>
            <Label>거리</Label>
          </DistanceBlock>

          <MetricGrid>
            {METRICS.map((m) => (
              <GridCell key={m.label}>
                <Value>
                  {m.value}
                  {m.unit && <Unit>{m.unit}</Unit>}
                  {m.pulse && <PulseButton aria-label={`${m.label} 그래프`}><PulseIcon /></PulseButton>}
                </Value>
                <Label>{m.label}</Label>
              </GridCell>
            ))}
          </MetricGrid>

          <Actions>
            <ActionButton><PhotoIcon />사진</ActionButton>
            <ActionButton><ShareIcon />공유</ActionButton>
          </Actions>
        </Summary>

        <NextSection>
          <SectionTitle>평가</SectionTitle>
        </NextSection>
      </Scroller>

      <NavBar>
        <NavButton aria-label="최근 앱">
          <svg width="30" height="32" viewBox="0 0 30 32" stroke="#8f8f8f" strokeWidth="3" strokeLinecap="round"><path d="M3 3V29M15 3V29M27 3V29" /></svg>
        </NavButton>
        <NavButton aria-label="홈">
          <svg width="34" height="34" viewBox="0 0 34 34"><rect x="3" y="3" width="28" height="28" rx="9" fill="none" stroke="#8f8f8f" strokeWidth="3" /></svg>
        </NavButton>
        <NavButton aria-label="뒤로 가기">
          <svg width="20" height="32" viewBox="0 0 20 32" fill="none" stroke="#8f8f8f" strokeWidth="3" strokeLinecap="round"><path d="M17 3L3 16 17 29" /></svg>
        </NavButton>
      </NavBar>
    </Screen>
  );
}
